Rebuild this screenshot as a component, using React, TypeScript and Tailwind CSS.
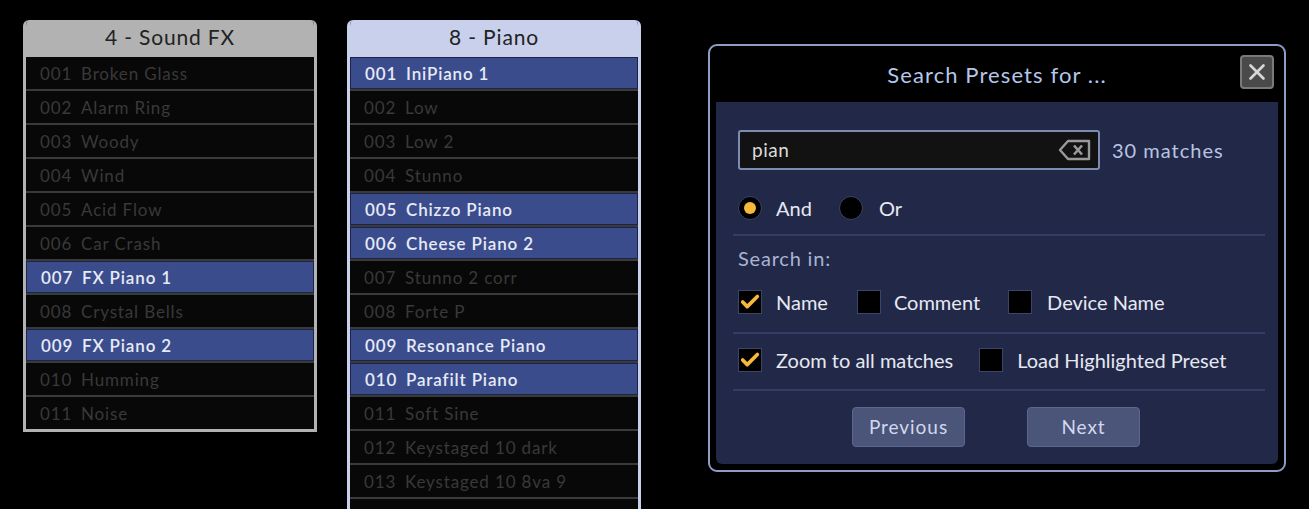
import { Check, X } from "lucide-react";

const FONT = { fontFamily: "Lato, 'Noto Sans', sans-serif" };

type Preset = { num: string; name: string; hit?: boolean };

const soundFx: Preset[] = [
  { num: "001", name: "Broken Glass" },
  { num: "002", name: "Alarm Ring" },
  { num: "003", name: "Woody" },
  { num: "004", name: "Wind" },
  { num: "005", name: "Acid Flow" },
  { num: "006", name: "Car Crash" },
  { num: "007", name: "FX Piano 1", hit: true },
  { num: "008", name: "Crystal Bells" },
  { num: "009", name: "FX Piano 2", hit: true },
  { num: "010", name: "Humming" },
  { num: "011", name: "Noise" },
];

const piano: Preset[] = [
  { num: "001", name: "IniPiano 1", hit: true },
  { num: "002", name: "Low" },
  { num: "003", name: "Low 2" },
  { num: "004", name: "Stunno" },
  { num: "005", name: "Chizzo Piano", hit: true },
  { num: "006", name: "Cheese Piano 2", hit: true },
  { num: "007", name: "Stunno 2 corr" },
  { num: "008", name: "Forte P" },
  { num: "009", name: "Resonance Piano", hit: true },
  { num: "010", name: "Parafilt Piano", hit: true },
  { num: "011", name: "Soft Sine" },
  { num: "012", name: "Keystaged 10 dark" },
  { num: "013", name: "Keystaged 10 8va 9" },
  { num: "", name: "" },
];

function PresetRow({ p }: { p: Preset }) {
  return (
    <div
      className={`h-[32px] shrink-0 flex items-center pl-[14px] pt-[1px] text-[17px] tracking-[0.05em] ${
        p.hit
          ? "bg-[#3b4c8c] border border-[#1c2548] text-[#e6eaf6] font-semibold"
          : "bg-[#080808] text-[#393939]"
      }`}
    >
      <span className="w-[41px]">{p.num}</span>
      <span>{p.name}</span>
    </div>
  );
}

function BankPanel({
  title,
  presets,
  border,
  head,
}: {
  title: string;
  presets: Preset[];
  border: string;
  head: string;
}) {
  return (
    <div className={`w-[294px] rounded-t-[6px] border-[3px] border-t-0 ${border} self-start overflow-hidden`}>
      <div className={`h-[37px] flex items-center justify-center pb-[3px] text-[21px] text-[#222] tracking-[0.04em] ${head}`}>
        {title}
      </div>
      <div className="flex flex-col gap-[2px] bg-[#3a3a3a]">
        {presets.map((p, i) => (
          <PresetRow key={i} p={p} />
        ))}
      </div>
    </div>
  );
}

function Box({ checked }: { checked?: boolean }) {
  return (
    <div className="w-[24px] h-[24px] bg-black border border-[#3c4468] flex items-center justify-center shrink-0">
      {checked && <Check className="w-[22px] h-[22px] text-[#f6b93b]" strokeWidth={4} />}
    </div>
  );
}

function Radio({ on }: { on?: boolean }) {
  return (
    <div className="w-[24px] h-[24px] rounded-full bg-black border border-[#3c4468] flex items-center justify-center shrink-0">
      {on && <div className="w-[12px] h-[12px] rounded-full bg-[#f6b93b]" />}
    </div>
  );
}

function Sep() {
  return <div className="h-[2px] bg-[#353d62] ml-[-5px] mr-[-7px] shrink-0" />;
}

export default function App() {
  return (
    <div className="w-[1309px] h-[509px] bg-black overflow-hidden flex pt-[20px] pl-[23px]" style={FONT}>
      <BankPanel title="4 - Sound FX" presets={soundFx} border="border-[#b2b2b2]" head="bg-[#b2b2b2]" />
      <div className="ml-[30px]">
        <BankPanel title="8 - Piano" presets={piano} border="border-[#c9d0ec]" head="bg-[#c9d0ec]" />
      </div>

      {/* Search dialog */}
      <div className="ml-[67px] mt-[24px] w-[578px] h-[428px] rounded-[9px] border-2 border-[#8d9dc4] bg-black flex flex-col px-[6px] pb-[6px] self-start">
        <div className="h-[56px] shrink-0 flex items-center justify-center relative">
          <span className="text-[22px] text-[#b4c6ea] tracking-[0.05em]">Search Presets for ...</span>
          <button className="absolute right-[4px] top-[9px] w-[34px] h-[34px] rounded-[4px] bg-[#4a4a4a] border-2 border-[#7a7a7a] flex items-center justify-center">
            <X className="w-[26px] h-[26px] text-[#d6d6d6]" strokeWidth={2.5} />
          </button>
        </div>

        <div className="flex-1 bg-[#222848] rounded-b-[6px] pl-[22px] pr-[20px] pt-[28px] flex flex-col text-[20px]">
          <div className="flex items-center">
            <div className="w-[362px] h-[40px] bg-[#121212] border-2 border-[#7c8bb2] rounded-[3px] flex items-center pl-[12px] pr-[6px]">
              <span className="flex-1 text-[19px] text-[#dcdcdc] tracking-[0.03em]">pian</span>
              <svg width="34" height="22" viewBox="0 0 34 22" fill="none">
                <path
                  d="M10 2H31V20H10L2 11Z"
                  stroke="#9a9a9a"
                  strokeWidth="2.4"
                  strokeLinejoin="round"
                />
                <path d="M16 6.5L24 15.5M24 6.5L16 15.5" stroke="#9a9a9a" strokeWidth="2.6" />
              </svg>
            </div>
            <span className="ml-[12px] text-[20px] text-[#b8c4e2] tracking-[0.05em]">30 matches</span>
          </div>

          <div className="h-[64px] shrink-0 flex items-center text-[#e6e8f2] pt-[12px]">
            <Radio on />
            <span className="ml-[14px]">And</span>
            <div className="ml-[27px]">
              <Radio />
            </div>
            <span className="ml-[16px]">Or</span>
          </div>
          <Sep />

          <div className="h-[44px] shrink-0 flex items-center text-[#a9b4d2] tracking-[0.04em]">Search in:</div>
          <div className="h-[52px] shrink-0 flex items-center text-[#e6e8f2] pb-[8px]">
            <Box checked />
            <span className="ml-[14px]">Name</span>
            <div className="ml-[29px]">
              <Box />
            </div>
            <span className="ml-[13px]">Comment</span>
            <div className="ml-[28px]">
              <Box />
            </div>
            <span className="ml-[15px]">Device Name</span>
          </div>
          <Sep />

          <div className="h-[55px] shrink-0 flex items-center text-[#e6e8f2] pb-[4px]">
            <Box checked />
            <span className="ml-[14px]">Zoom to all matches</span>
            <div className="ml-[26px]">
              <Box />
            </div>
            <span className="ml-[14px]">Load Highlighted Preset</span>
          </div>
          <Sep />

          <div className="flex justify-center gap-[62px] pt-[16px] mr-[4px]">
            <button className="w-[113px] h-[40px] rounded-[4px] bg-[#4b5479] border border-[#5d678e] text-[19px] text-[#d2d8ee] tracking-[0.05em]">
              Previous
            </button>
            <button className="w-[113px] h-[40px] rounded-[4px] bg-[#4b5479] border border-[#5d678e] text-[19px] text-[#d2d8ee] tracking-[0.05em]">
              Next
            </button>
          </div>
        </div>
      </div>
    </div>
  );
}
